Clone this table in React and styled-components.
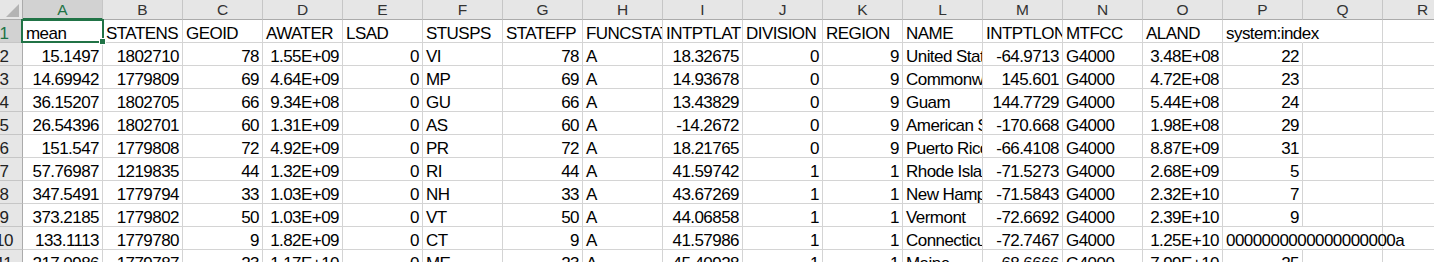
import React from 'react';
import styled, {createGlobalStyle, css} from 'styled-components';

const columns = ['A', 'B', 'C', 'D', 'E', 'F', 'G', 'H', 'I', 'J', 'K', 'L', 'M', 'N', 'O', 'P', 'Q', 'R'];

const rows = [
  ['mean', 'STATENS', 'GEOID', 'AWATER', 'LSAD', 'STUSPS', 'STATEFP', 'FUNCSTAT', 'INTPTLAT', 'DIVISION', 'REGION', 'NAME', 'INTPTLON', 'MTFCC', 'ALAND', 'system:index'],
  ['15.1497', '1802710', '78', '1.55E+09', '0', 'VI', '78', 'A', '18.32675', '0', '9', 'United States Virgin Islands', '-64.9713', 'G4000', '3.48E+08', '22'],
  ['14.69942', '1779809', '69', '4.64E+09', '0', 'MP', '69', 'A', '14.93678', '0', '9', 'Commonwealth of the Northern Mariana Islands', '145.601', 'G4000', '4.72E+08', '23'],
  ['36.15207', '1802705', '66', '9.34E+08', '0', 'GU', '66', 'A', '13.43829', '0', '9', 'Guam', '144.7729', 'G4000', '5.44E+08', '24'],
  ['26.54396', '1802701', '60', '1.31E+09', '0', 'AS', '60', 'A', '-14.2672', '0', '9', 'American Samoa', '-170.668', 'G4000', '1.98E+08', '29'],
  ['151.547', '1779808', '72', '4.92E+09', '0', 'PR', '72', 'A', '18.21765', '0', '9', 'Puerto Rico', '-66.4108', 'G4000', '8.87E+09', '31'],
  ['57.76987', '1219835', '44', '1.32E+09', '0', 'RI', '44', 'A', '41.59742', '1', '1', 'Rhode Island', '-71.5273', 'G4000', '2.68E+09', '5'],
  ['347.5491', '1779794', '33', '1.03E+09', '0', 'NH', '33', 'A', '43.67269', '1', '1', 'New Hampshire', '-71.5843', 'G4000', '2.32E+10', '7'],
  ['373.2185', '1779802', '50', '1.03E+09', '0', 'VT', '50', 'A', '44.06858', '1', '1', 'Vermont', '-72.6692', 'G4000', '2.39E+10', '9'],
  ['133.1113', '1779780', '9', '1.82E+09', '0', 'CT', '9', 'A', '41.57986', '1', '1', 'Connecticut', '-72.7467', 'G4000', '1.25E+10', '0000000000000000000a'],
  ['217.0986', '1779787', '23', '1.17E+10', '0', 'ME', '23', 'A', '45.40928', '1', '1', 'Maine', '-68.6666', 'G4000', '7.99E+10', '25'],
];

const isNumber = (v) => /^-?[\d.]+(E[+-]\d+)?$/.test(v);

const GlobalStyle = createGlobalStyle`
  html, body {
    margin: 0;
    padding: 0;
    background: #fff;
    overflow: hidden;
  }
  body {
    font-family: "Liberation Sans", Arial, sans-serif;
  }
`;

const Sheet = styled.div`
  display: grid;
  grid-template-columns: 23px repeat(${columns.length}, 80px);
  grid-template-rows: 20px;
  grid-auto-rows: 23px;
  width: max-content;
  background: #fff;
`;

const Corner = styled.div`
  background: #e6e6e6;
  border-right: 1px solid #ababab;
  border-bottom: 1px solid #ababab;
  box-sizing: border-box;
  display: flex;
  align-items: flex-end;
  justify-content: flex-end;
  padding: 0 3px 2px 0;
`;

const ColHead = styled.div`
  background: ${(p) => (p.$active ? '#d2d2d2' : '#e6e6e6')};
  color: ${(p) => (p.$active ? '#217346' : '#333')};
  border-right: 1px solid #c6c6c6;
  border-bottom: ${(p) => (p.$active ? '2px solid #217346' : '1px solid #ababab')};
  box-sizing: border-box;
  font-size: 15.5px;
  line-height: 19px;
  text-align: center;
`;

const RowHead = styled.div`
  background: ${(p) => (p.$active ? '#d2d2d2' : '#e6e6e6')};
  color: ${(p) => (p.$active ? '#217346' : '#222')};
  border-right: 1px solid #ababab;
  border-bottom: 1px solid #c6c6c6;
  box-sizing: border-box;
  overflow: hidden;
  display: flex;
  align-items: flex-end;
  font-size: 17px;
  line-height: 17px;
`;

const RowNum = styled.span`
  flex: none;
  width: 30px;
  margin-left: -11px;
  text-align: center;
  letter-spacing: -0.5px;
`;

const Cell = styled.div`
  position: relative;
  box-sizing: border-box;
  border-right: 1px solid ${(p) => (p.$spill ? 'transparent' : '#d4d4d4')};
  border-bottom: 1px solid #d4d4d4;
  display: flex;
  align-items: flex-end;
  justify-content: ${(p) => (p.$right ? 'flex-end' : 'flex-start')};
  padding: 0 3px;
  overflow: ${(p) => (p.$spill ? 'visible' : 'hidden')};
  white-space: nowrap;
  font-size: 17px;
  line-height: 16px;
  letter-spacing: -0.55px;
  color: #000;
  z-index: ${(p) => (p.$spill ? 1 : 0)};

  ${(p) =>
    p.$selected &&
    css`
      overflow: visible;
      z-index: 2;
      &::before {
        content: '';
        position: absolute;
        left: -2px;
        top: -1px;
        right: -2px;
        bottom: -1px;
        border: 2px solid #217346;
        pointer-events: none;
      }
      &::after {
        content: '';
        position: absolute;
        right: -4px;
        bottom: -3px;
        width: 5px;
        height: 5px;
        background: #217346;
        border: 1px solid #fff;
      }
    `}
`;

const CellText = styled.span`
  display: block;
`;

const CornerMark = () => (
  <svg width="13" height="13" viewBox="0 0 13 13">
    <polygon points="13,0 13,13 0,13" fill="#b4b4b4" />
  </svg>
);

const App = () => {
  return (
    <>
      <GlobalStyle />
      <Sheet>
        <Corner>
          <CornerMark />
        </Corner>
        {columns.map((c, i) => (
          <ColHead key={c} $active={i === 0}>
            {c}
          </ColHead>
        ))}
        {rows.map((row, r) => (
          <React.Fragment key={r}>
            <RowHead $active={r === 0}>
              <RowNum>{r + 1}</RowNum>
            </RowHead>
            {columns.map((c, i) => {
              const value = row[i] || '';
              const right = isNumber(value);
              const spill = value !== '' && !right && !row[i + 1];
              return (
                <Cell key={c} $right={right} $spill={spill} $selected={r === 0 && i === 0}>
                  <CellText>{value}</CellText>
                </Cell>
              );
            })}
          </React.Fragment>
        ))}
      </Sheet>
    </>
  );
};

export default App;
